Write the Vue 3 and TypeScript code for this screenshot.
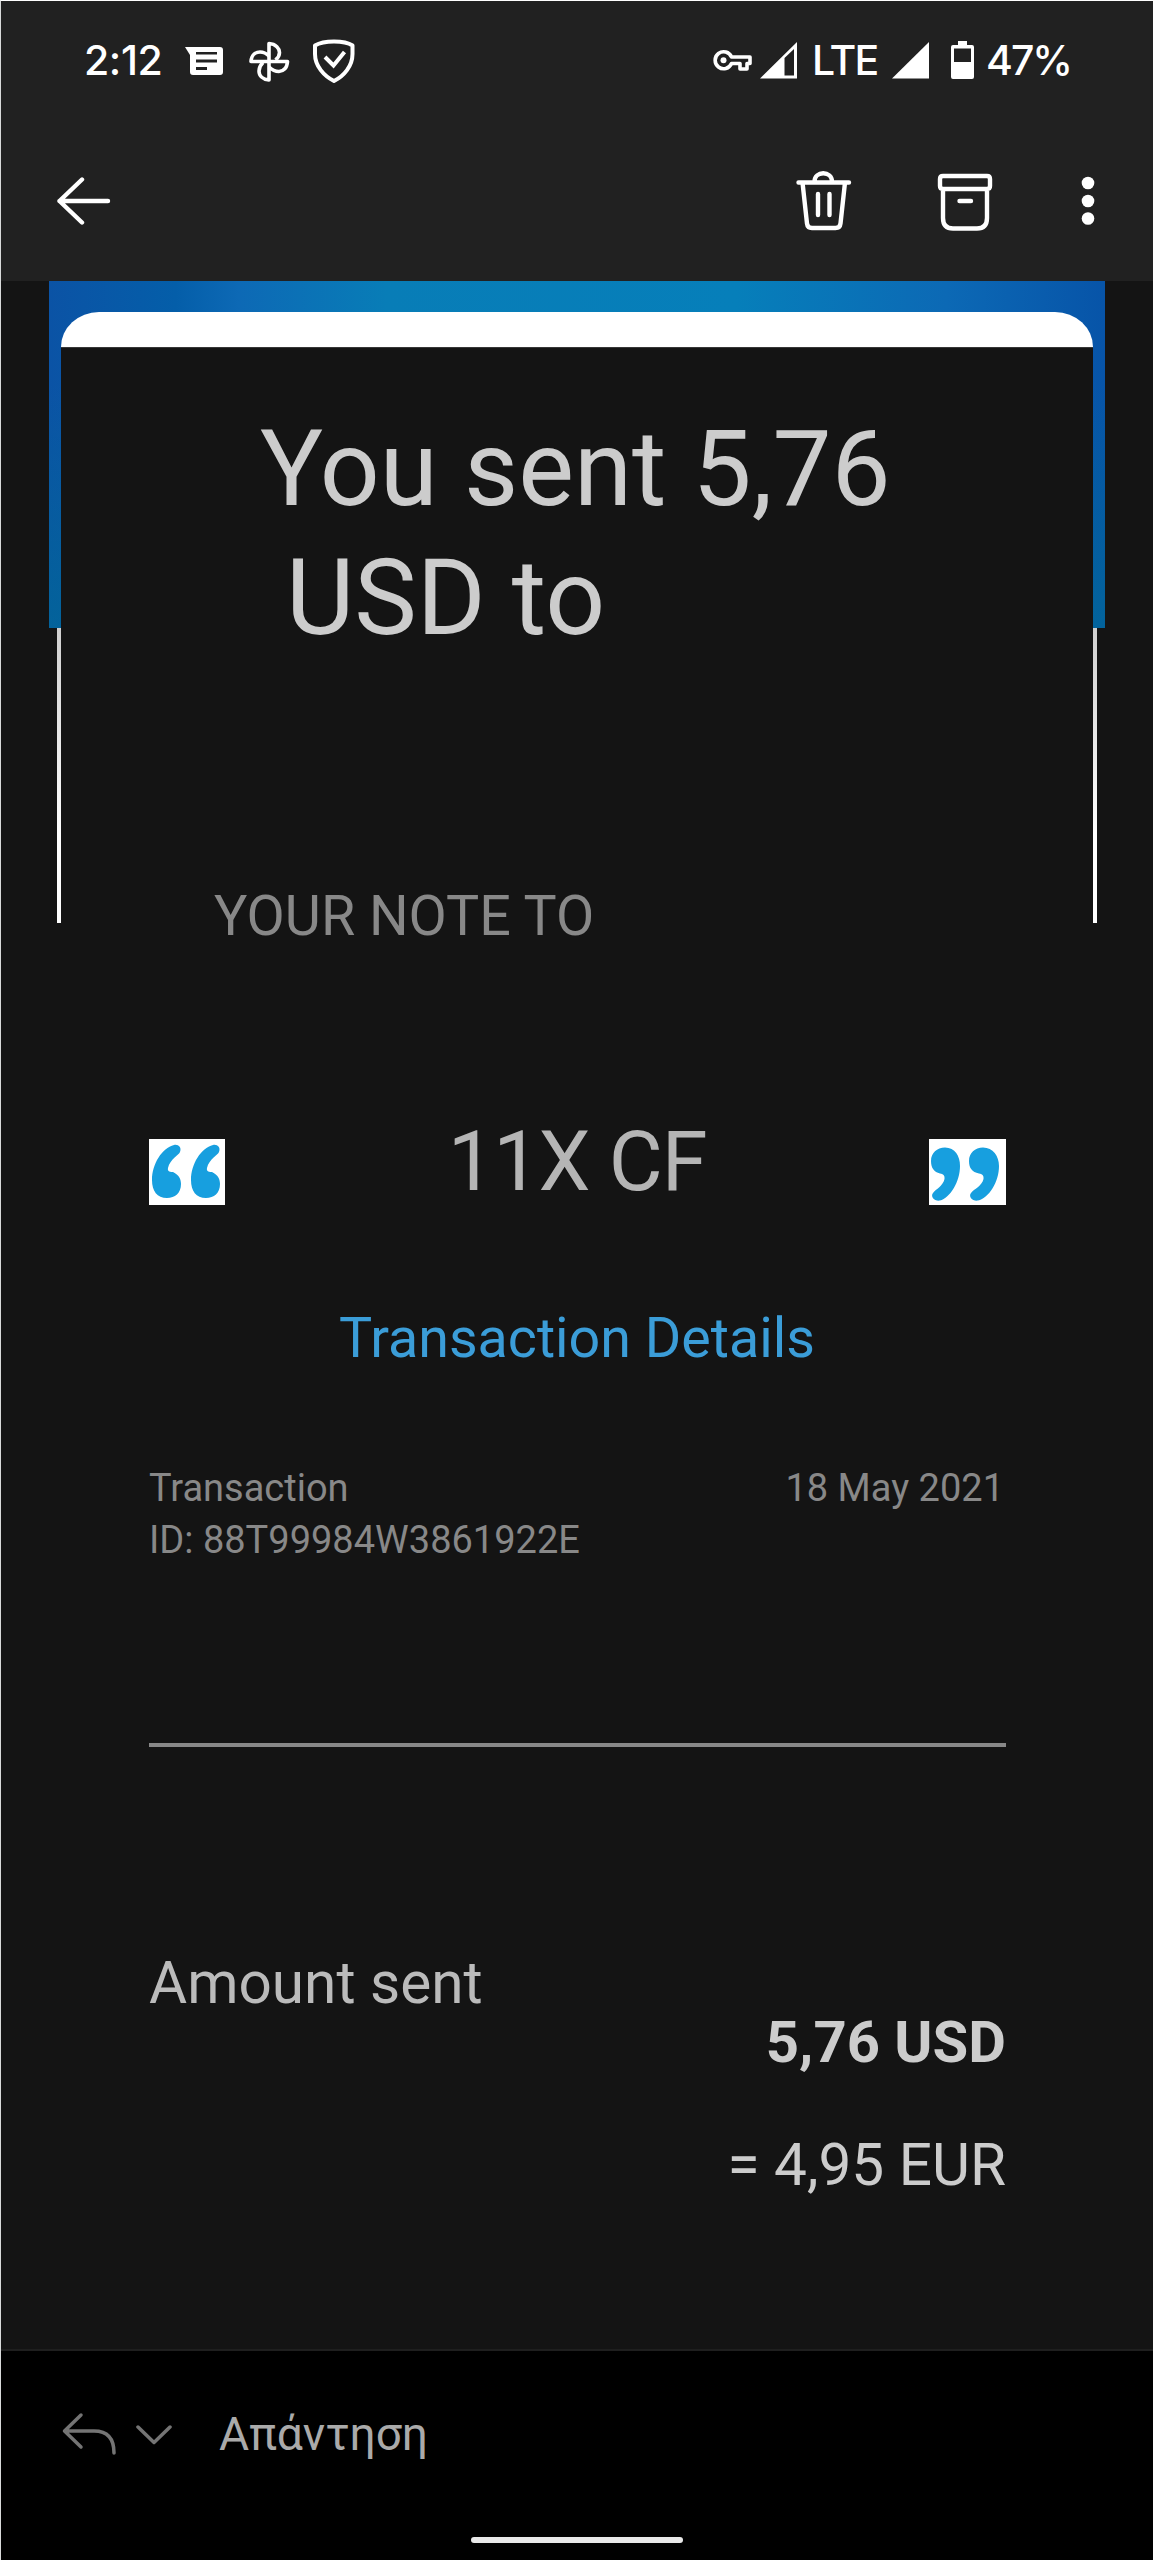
<script setup lang="ts">
interface Amount {
  text: string
  strong: boolean
}

const headline: string[] = ['You sent 5,76', 'USD to']
const transaction = {
  label: 'Transaction',
  id: 'ID: 88T99984W3861922E',
  date: '18 May 2021',
}
const amounts: Amount[] = [
  { text: '5,76 USD', strong: true },
  { text: '= 4,95 EUR', strong: false },
]
</script>

<template>
  <div class="screen">
    <header class="top">
      <div class="status">
        <span class="clock">2:12</span>
        <svg class="s-message" width="40" height="32" viewBox="0 0 40 32">
          <path fill="#fff" fill-rule="evenodd" d="M0 1H35Q38 1 38 4V26Q38 29 35 29H8Q5 29 5 26V9ZM11 6V8.500H32V6ZM11 13.500V16.500H32V13.500ZM11 21V24H22V21Z" />
        </svg>
        <svg class="s-fan" width="42" height="42" viewBox="0 0 42 42" fill="none" stroke="#fff" stroke-width="3.6" stroke-linejoin="round">
          <path d="M20 20.500V2.500C27 3 30.500 7.500 30.500 11.500C30.500 14.500 29 17 26.500 19" />
          <path d="M20 20.500H2C2.500 13.500 7 11 11 11C14.500 11 17.500 12.500 20 15" />
          <path d="M20 20.500H38.500C38 27.500 34 30.500 30 30.500C26 30.500 23 29 20 26" />
          <path d="M20 20.500V39C13.500 38.500 10 34.500 10 30C10 26.500 11.500 24 14 21.500" />
        </svg>
        <svg class="s-shield" width="44" height="46" viewBox="0 0 44 46" fill="none" stroke="#fff">
          <path stroke-width="4" stroke-linejoin="round" d="M22 3.500C29 3.500 36 4.500 40.500 7.500V16C40.500 28 32 38 22 43C12 38 3 28 3 16V7.500C8 4.500 15 3.500 22 3.500Z" />
          <path stroke-width="4" d="M13 19L21.500 27.500L32.500 14" />
        </svg>
        <span class="grow"></span>
        <svg class="s-key" width="40" height="24" viewBox="0 0 40 24" fill="none" stroke="#fff">
          <path stroke-width="3.600" stroke-linejoin="round" d="M18.500 8H37V14.500H34V20H27V14.500H18.500A8.500 8.500 0 1 1 18.500 8Z" />
          <circle cx="10.500" cy="11.300" r="3" fill="#fff" stroke="none" />
        </svg>
        <svg class="s-sig1" width="37" height="37" viewBox="0 0 37 37">
          <path fill="#fff" fill-rule="evenodd" d="M0 36.500L37 0V36.500ZM24.500 16V33.500H34V7Z" />
        </svg>
        <span class="lte">LTE</span>
        <svg class="s-sig2" width="37" height="37" viewBox="0 0 37 37">
          <path fill="#fff" d="M0 36.500L37 0V36.500Z" />
        </svg>
        <svg class="s-battery" width="23" height="38" viewBox="0 0 23 38">
          <path fill="#fff" fill-rule="evenodd" d="M7 0H16V4H21Q23 4 23 6V36Q23 38 21 38H2Q0 38 0 36V6Q0 4 2 4H7ZM3 7.500V21H20V7.500Z" />
        </svg>
        <span class="percent">47%</span>
      </div>
      <nav class="actions">
        <svg class="a-back" width="54" height="48" viewBox="0 0 54 48" fill="none" stroke="#fff" stroke-width="4.400" stroke-linecap="round" stroke-linejoin="round">
          <path d="M51 24H2.500M25 2.500L2.500 24L25 45.500" />
        </svg>
        <span class="grow"></span>
        <svg class="a-trash" width="56" height="60" viewBox="0 0 56 60" fill="none" stroke="#fff" stroke-width="4.400" stroke-linecap="round" stroke-linejoin="round">
          <path d="M2.500 11.500H53M18.500 10.500C18.500 -.5 36 -.5 36 10.500M6.500 11.500L11 52.500Q11.500 57 16 57H39.500Q44 57 44.500 52.500L49 11.500M22 23V44M33.500 23V44" />
        </svg>
        <svg class="a-archive" width="56" height="58" viewBox="0 0 56 58" fill="none" stroke="#fff" stroke-width="4.400" stroke-linecap="round" stroke-linejoin="round">
          <path d="M6 3H50Q53 3 53 6V13Q53 16 50 16H6Q3 16 3 13V6Q3 3 6 3ZM6 16V45Q6 55.500 16 55.500H40Q50 55.500 50 45V16M22.500 28H34" />
        </svg>
        <svg class="a-more" width="14" height="50" viewBox="0 0 14 50" fill="#fff">
          <circle cx="7" cy="7" r="6.300" /><circle cx="7" cy="25" r="6.300" /><circle cx="7" cy="42.500" r="6.300" />
        </svg>
      </nav>
    </header>

    <main class="mail">
      <section class="hero">
        <div class="banner">
          <div class="cap"></div>
          <div class="sides"></div>
        </div>
        <div class="frame"></div>
        <div class="hero-text">
          <h1 class="headline">
            <span v-for="(line, i) in headline" :key="line" :class="['line', 'line-' + i]">{{ line }}</span>
          </h1>
          <p class="note">YOUR NOTE TO</p>
        </div>
      </section>

      <section class="quote">
        <svg width="76" height="66" viewBox="0 0 76 66">
          <rect width="76" height="66" fill="#fff" />
          <g fill="#179fdf">
            <path d="M25 6C29 5 33 8 31 13C30 16 21 20 19 29C18 33 22 33 24 33C30 36 32 40 32 45C32 54 26 59 18 59C8 59 3 52 3 41C3 25 13 9 25 6Z" />
            <path d="M64 6C68 5 72 8 70 13C69 16 60 20 58 29C57 33 61 33 63 33C69 36 71 40 71 45C71 54 65 59 57 59C47 59 42 52 42 41C42 25 52 9 64 6Z" />
          </g>
        </svg>
        <p class="message">11X CF</p>
        <svg width="77" height="66" viewBox="0 0 77 66">
          <rect width="77" height="66" fill="#fff" />
          <g fill="#179fdf">
            <path d="M16 8.500C26 8.500 31 17 31 27C31 43 21 59 11 61.500C6 62.500 1 58 4 54C7 50 14 47 15.500 40C16 36 14 35 11 34.500C5 33 2 29 2 22C2 14 8 8.500 16 8.500Z" />
            <path d="M54 8.500C64 8.500 70 17 70 27C70 43 60 59 49 61.500C44 62.500 39 58 42 54C45 50 53 47 54.500 40C55 36 53 35 50 34.500C43 33 40 29 40 22C40 14 46 8.500 54 8.500Z" />
          </g>
        </svg>
      </section>

      <h2 class="details">Transaction Details</h2>

      <section class="meta">
        <div>
          <div class="meta-label">{{ transaction.label }}</div>
          <div class="meta-id">{{ transaction.id }}</div>
        </div>
        <div class="meta-date">{{ transaction.date }}</div>
      </section>

      <hr class="rule" />

      <section class="sum">
        <span class="sum-label">Amount sent</span>
        <div class="sum-values">
          <span v-for="a in amounts" :key="a.text" :class="{ strong: a.strong }">{{ a.text }}</span>
        </div>
      </section>
    </main>

    <footer class="reply">
      <div class="reply-row">
        <svg class="r-arrow" width="56" height="44" viewBox="0 0 56 44" fill="none" stroke="#747474" stroke-width="3.500" stroke-linecap="round" stroke-linejoin="round">
          <path d="M19 3L2.500 19L19 35M3 19H32C46 19 52 27 52 41" />
        </svg>
        <svg class="r-chevron" width="36" height="22" viewBox="0 0 36 22" fill="none" stroke="#747474" stroke-width="3.500" stroke-linecap="round" stroke-linejoin="round">
          <path d="M2 3L18 18.500L34 3" />
        </svg>
        <span class="reply-text">Απάντηση</span>
      </div>
      <div class="pill"></div>
    </footer>
  </div>
</template>

<style>
body {
  margin: 0;
  background: #141414;
}
</style>

<style scoped>
.screen {
  box-sizing: border-box;
  width: 1153px;
  height: 2560px;
  display: flex;
  flex-direction: column;
  overflow: hidden;
  background: #141414;
  border-top: 1px solid #fff;
  border-left: 1px solid #d8dada;
  font-family: Roboto, 'Noto Sans', sans-serif;
  color: #ccc;
}
h1, h2, p { margin: 0; font-weight: 400; }
svg { display: block; flex: none; }
span, p, h1, h2 { white-space: nowrap; }
.grow { flex: 1; }

.top {
  flex: none;
  height: 280px;
  background: #212121;
}
.status {
  height: 120px;
  display: flex;
  align-items: flex-start;
  padding: 0 83px 0 83px;
  color: #fff;
  font: 500 41px/48px Inter, sans-serif;
}
.clock, .lte, .percent { margin-top: 35px; }
.clock { width: 81px; letter-spacing: -.4px; }
.s-message { margin: 45px 0 0 20px; }
.s-fan { margin: 40px 0 0 24px; }
.s-shield { margin: 37px 0 0 21px; }
.s-key { margin-top: 48px; }
.s-sig1 { margin: 41px 0 0 7px; }
.lte { width: 73px; margin-left: 15px; letter-spacing: -1.8px; }
.s-sig2 { margin: 41px 0 0 7px; }
.s-battery { margin: 40px 0 0 22px; }
.percent { width: 84px; margin-left: 12px; letter-spacing: -2px; }

.actions {
  display: flex;
  align-items: flex-start;
  height: 160px;
  padding: 0 58px 0 56px;
}
.a-back { margin-top: 56px; }
.a-trash { margin-top: 50px; }
.a-archive { margin: 52px 0 0 85px; }
.a-more { margin: 55px 0 0 88px; }

.mail { flex: none; height: 2068px; border-bottom: 2px solid #1f1f1f; }
.hero { display: grid; height: 858px; }
.hero > * { grid-area: 1 / 1; }
.banner {
  box-sizing: border-box;
  width: 1056px;
  height: 347px;
  margin-left: 48px;
  padding: 31px 12px 0;
  background:
    linear-gradient(to bottom, rgba(0, 100, 150, 0) 30%, rgba(0, 105, 150, .7)),
    linear-gradient(to right, #0b53a5 0%, #045ea9 12%, #0d69b5 18%, #087db7 32%, #067fba 65%, #0c69b5 85%, #0754a8 100%);
}
.cap { height: 35px; border-radius: 38px 38px 0 0 / 35px 35px 0 0; background: #fff; }
.sides { height: 281px; background: #141414; border-top: 1px solid #373737; box-sizing: border-box; }
.frame {
  box-sizing: border-box;
  width: 1040px;
  height: 295px;
  margin: 347px 0 0 56px;
  border-left: 4px solid;
  border-right: 4px solid;
  border-image: linear-gradient(#d0d0d0, #fff 70%) 1;
  border-image-width: 0 4px;
}
.hero-text { padding-top: 124px; }
.headline { font-size: 105.2px; line-height: 129px; height: 258px; }
.line { display: block; }
.line-0 { margin-left: 259px; }
.line-1 { margin-left: 285px; }
.note { margin: 220px 0 0 213px; font-size: 55.6px; line-height: 66px; color: #888; }

.quote { display: flex; justify-content: space-between; margin-left: 148px; width: 857px; height: 66px; }
.message { margin-top: -10px; font-size: 83px; letter-spacing: -1.2px; line-height: 66px; color: #b5b5b5; }
.details { margin-top: 100px; text-align: center; font-size: 55.6px; line-height: 66px; color: #3b9dd8; }
.meta {
  display: flex;
  justify-content: space-between;
  margin: 91px 149px 0 148px;
  height: 104px;
  font-size: 38px;
  line-height: 52px;
  color: #888;
}
.rule { margin: 177px 0 0 148px; width: 857px; height: 4px; border: 0; background: #888; }
.sum {
  display: flex;
  justify-content: space-between;
  margin: 201px 147px 0 148px;
  font-size: 58.5px;
  line-height: 70px;
}
.sum-label { color: #bbb; }
.sum-values { display: flex; flex-direction: column; align-items: flex-end; gap: 53px; margin-top: 59px; }
.strong { font-weight: 700; font-size: 58px; }

.reply { flex: 1; background: #000; }
.reply-row { display: flex; align-items: flex-start; height: 186px; padding-left: 61px; }
.r-arrow { margin-top: 61px; }
.r-chevron { margin: 73px 0 0 18px; }
.reply-text { margin: 56px 0 0 47px; font-size: 46.200px; line-height: 54px; color: #aaa; }
.pill { width: 212px; height: 6px; margin-left: 470px; border-radius: 3px; background: #e8e8e8; }
</style>
